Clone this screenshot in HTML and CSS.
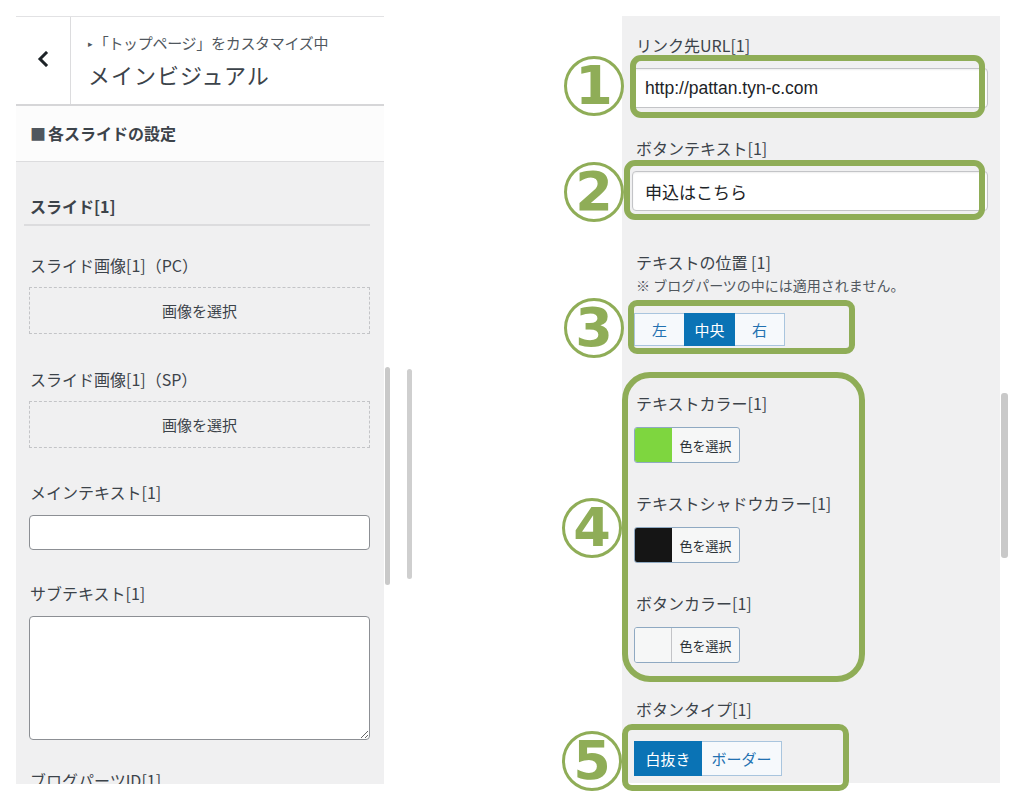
FILE: index.html
```html
<!DOCTYPE html>
<html lang="ja">
<head>
<meta charset="utf-8">
<title>メインビジュアル</title>
<link rel="stylesheet" href="styles.css">
</head>
<body>
<div class="page">
  <section class="lpanel">
    <header class="lhead">
      <div class="back">
        <svg width="12" height="16" viewBox="0 0 12 16"><path d="M9 2 L3 8 L9 14" fill="none" stroke="#1d2327" stroke-width="3" stroke-linecap="square"/></svg>
      </div>
      <div class="titles">
        <div class="crumb"><span class="tri">▸</span>「トップページ」をカスタマイズ中</div>
        <div class="title">メインビジュアル</div>
      </div>
    </header>
    <div class="secbar"><span class="sq">■</span>各スライドの設定</div>
    <div class="lcontent">
      <h3 class="slidehead">スライド[1]</h3>
      <div class="grp g1">
        <div class="label">スライド画像[1]（PC）</div>
        <div class="dashed">画像を選択</div>
      </div>
      <div class="grp g2">
        <div class="label">スライド画像[1]（SP）</div>
        <div class="dashed">画像を選択</div>
      </div>
      <div class="grp g3">
        <div class="label">メインテキスト[1]</div>
        <input class="ltext" type="text">
      </div>
      <div class="grp g4">
        <div class="label">サブテキスト[1]</div>
        <textarea class="larea"></textarea>
      </div>
      <div class="grp g5">
        <div class="label">ブログパーツID[1]</div>
      </div>
    </div>
  </section>
  <div class="sbar sb1"></div>
  <div class="sbar sb2"></div>

  <section class="rpanel">
    <div class="rf rf1">
      <div class="label">リンク先URL[1]</div>
      <div class="ctl">
        <input class="rtext" type="text" value="http://pattan.tyn-c.com">
        <div class="anno a1"></div>
        <div class="num n1">1</div>
      </div>
    </div>
    <div class="rf rf2">
      <div class="label">ボタンテキスト[1]</div>
      <div class="ctl">
        <input class="rtext" type="text" value="申込はこちら">
        <div class="anno a2"></div>
        <div class="num n2">2</div>
      </div>
    </div>
    <div class="rf rf3">
      <div class="label">テキストの位置 [1]</div>
      <div class="note">※ ブログパーツの中には適用されません。</div>
      <div class="ctl seg-wrap">
        <div class="seg">
          <span class="sb">左</span><span class="sb on">中央</span><span class="sb">右</span>
        </div>
        <div class="anno a3"></div>
        <div class="num n3">3</div>
      </div>
    </div>
    <div class="rf rf4 ctl">
      <div class="label">テキストカラー[1]</div>
      <div class="cbtn"><span class="sw sw-green"></span><span class="ct">色を選択</span></div>
      <div class="label lsp">テキストシャドウカラー[1]</div>
      <div class="cbtn"><span class="sw sw-black"></span><span class="ct">色を選択</span></div>
      <div class="label lsp">ボタンカラー[1]</div>
      <div class="cbtn"><span class="sw sw-white"></span><span class="ct">色を選択</span></div>
      <div class="anno a4"></div>
      <div class="num n4">4</div>
    </div>
    <div class="rf rf5">
      <div class="label">ボタンタイプ[1]</div>
      <div class="ctl seg-wrap">
        <div class="seg seg5">
          <span class="sb on">白抜き</span><span class="sb">ボーダー</span>
        </div>
        <div class="anno a5"></div>
        <div class="num n5">5</div>
      </div>
    </div>
  </section>
  <div class="sbar sb3"></div>
</div>
</body>
</html>
```

FILE: styles.css
```css
* { box-sizing: border-box; }
html, body { margin: 0; padding: 0; background: #fff; }
body {
  font-family: "Noto Sans CJK JP", "Noto Sans", sans-serif;
  color: #3c434a;
  width: 1024px;
  height: 800px;
  overflow: hidden;
}
.page {
  display: flex;
  align-items: flex-start;
  padding: 16px 0 0 16px;
}

/* ---------- left panel ---------- */
.lpanel {
  width: 368px;
  height: 768px;
  background: #f0f0f1;
  overflow: hidden;
  flex: none;
}
.lhead {
  display: flex;
  height: 90px;
  background: #fff;
  border-top: 1px solid #e2e2e4;
  border-bottom: 2px solid #d6d6d8;
}
.back {
  width: 55px;
  border-right: 1px solid #dcdcde;
  display: flex;
  align-items: center;
  justify-content: center;
  padding-bottom: 3px;
}
.titles {
  padding: 16px 0 0 17px;
}
.crumb {
  font-size: 15px;
  line-height: 20px;
  color: #50575e;
  letter-spacing: -0.3px;
}
.tri { font-size: 9px; margin-right: 1px; vertical-align: 2px; color: #50575e; }
.title {
  margin-top: 5px;
  font-size: 22px;
  line-height: 30px;
  color: #3c434a;
  letter-spacing: 1px;
}
.secbar {
  background: #fcfcfc;
  padding: 15px 0 16px 14px;
  line-height: 24px;
  font-size: 16px;
  font-weight: bold;
  color: #3c434a;
  border-bottom: 1px solid #dcdcde;
}
.sq { color: #50575e; margin-right: 2px; }
.lcontent {
  padding: 32px 14px 0 13px;
}
.slidehead {
  margin: 0 0 0 -5px;
  padding: 0 0 6px 6px;
  font-size: 16px;
  line-height: 24px;
  font-weight: bold;
  color: #3c434a;
  border-bottom: 2px solid #dcdcde;
}
.label {
  font-size: 16px;
  line-height: 24px;
  color: #3c434a;
  padding-left: 1px;
  white-space: nowrap;
}
.g1 { margin-top: 27px; }
.g2 { margin-top: 33px; }
.g3 { margin-top: 32px; }
.g4 { margin-top: 31px; }
.g5 { margin-top: 28px; }
.dashed {
  margin-top: 10px;
  height: 47px;
  border: 1px dashed #c3c4c7;
  display: flex;
  align-items: center;
  justify-content: center;
  font-size: 15px;
  color: #3c434a;
}
.ltext {
  display: block;
  margin-top: 11px;
  width: 100%;
  height: 35px;
  border: 1px solid #8c8f94;
  border-radius: 4px;
  background: #fff;
}
.larea {
  display: block;
  margin-top: 11px;
  width: 100%;
  height: 124px;
  border: 1px solid #8c8f94;
  border-radius: 4px;
  background: #fff;
  resize: both;
}

/* scrollbars */
.sbar { flex: none; background: #c9c9c9; border-radius: 3px; }
.sb1 { width: 5px; height: 218px; margin: 351px 0 0 1px; }
.sb2 { width: 5px; height: 210px; margin: 353px 0 0 17px; background: #cfcfcf; }
.sb3 { width: 7px; height: 165px; margin: 377px 0 0 1px; }

/* ---------- right panel ---------- */
.rpanel {
  flex: none;
  width: 378px;
  height: 767px;
  margin-left: 210px;
  background: #f0f0f1;
  padding: 17px 12px 0 12px;
}
.rpanel .label { padding-left: 2px; }
.ctl { position: relative; }
.rtext {
  display: block;
  margin: 11px 0 0 -2px;
  width: calc(100% + 2px);
  height: 40px;
  border: 1px solid #c3c4c7;
  border-radius: 4px;
  background: #fff;
  padding: 0 0 0 12px;
  font-family: "Liberation Sans", "Noto Sans CJK JP", sans-serif;
  font-size: 17.5px;
  color: #1d2327;
  box-shadow: inset 0 1px 2px rgba(0,0,0,.07);
}
.rf2 .rtext { font-family: "Noto Sans CJK JP", sans-serif; font-size: 17px; }
.rf2 { margin-top: 28px; }
.rf3 { margin-top: 39px; }
.note {
  font-size: 14px;
  line-height: 20px;
  color: #50575e;
  margin-top: 1px;
  padding-left: 2px;
}
.seg-wrap { margin-top: 18px; width: max-content; }
.seg { display: flex; width: max-content; }
.sb {
  display: flex;
  align-items: center;
  justify-content: center;
  width: 51px;
  height: 33px;
  font-size: 15px;
  color: #2271b1;
  background: #f6f9fc;
  border: 1px solid #a9c5de;
  margin-left: -1px;
}
.sb:first-child { margin-left: 0; }
.sb.on { background: #0a73b5; color: #fff; border-color: #0a73b5; position: relative; }
.seg5 .sb { height: 35px; }
.seg5 .sb:first-child { width: 68px; }
.seg5 .sb:last-child { width: 81px; }
.rf4 { margin-top: 45px; }
.lsp { margin-top: 28px; }
.cbtn {
  display: flex;
  margin-top: 12px;
  width: 106px;
  height: 36px;
  border: 1px solid #8fa9c2;
  border-radius: 3px;
  background: #f6f7f7;
  overflow: hidden;
}
.sw { width: 37px; height: 100%; border-right: 1px solid #c3c4c7; }
.sw-green { background: #7ed63f; border-right-color: #7ed63f; }
.sw-black { background: #151515; border-right-color: #151515; }
.sw-white { background: #f6f7f7; }
.ct {
  flex: 1;
  display: flex;
  align-items: center;
  justify-content: center;
  font-size: 13px;
  color: #2c3338;
}
.rf5 { margin-top: 34px; }
.rf5 .seg-wrap { margin-top: 20px; }

/* ---------- annotations (overlays) ---------- */
.anno {
  position: absolute;
  border: 6px solid #8fad57;
  pointer-events: none;
}
.a1 { left: -4px; right: 3px; top: -13px; bottom: -10px; border-radius: 11px; }
.a2 { left: -10px; right: 3px; top: -11px; bottom: -9px; border-radius: 11px; }
.a3 { left: -6px; right: -70px; top: -13px; bottom: -8px; border-radius: 9px; }
.a4 { left: -12px; right: 123px; top: -19px; bottom: -19px; border-radius: 28px; }
.a5 { left: -12px; right: -67px; top: -17px; bottom: -15px; border-radius: 10px; }
.num {
  position: absolute;
  width: 60px;
  height: 60px;
  border: 3px solid #8fad57;
  border-radius: 50%;
  background: #fff;
  color: #8fad57;
  font-family: "DejaVu Sans", sans-serif;
  font-weight: bold;
  font-size: 54px;
  line-height: 54px;
  text-align: center;
}
.n1 { left: -70px; top: -12px; }
.n2 { left: -70px; top: -9px; }
.n3 { left: -70px; top: -15px; }
.n4 { left: -72px; top: 107px; }
.n5 { left: -72px; top: -10px; }
```
